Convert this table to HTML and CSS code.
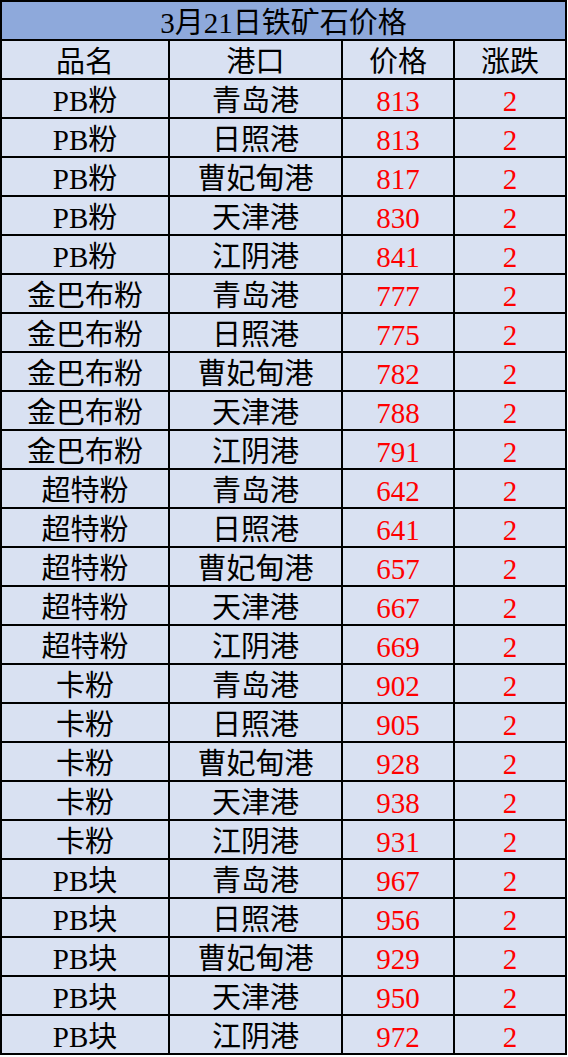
FILE: index.html
```html
<!DOCTYPE html>
<html lang="zh">
<head>
<meta charset="utf-8">
<title>3月21日铁矿石价格</title>
<link rel="stylesheet" href="styles.css">
</head>
<body>
<table class="price-table">
  <colgroup>
    <col class="c-name"><col class="c-port"><col class="c-price"><col class="c-chg">
  </colgroup>
  <thead>
    <tr><th colspan="4" class="title">3月21日铁矿石价格</th></tr>
    <tr class="head"><th>品名</th><th>港口</th><th>价格</th><th>涨跌</th></tr>
  </thead>
  <tbody>
    <tr><td>PB粉</td><td>青岛港</td><td class="num">813</td><td class="num">2</td></tr>
    <tr><td>PB粉</td><td>日照港</td><td class="num">813</td><td class="num">2</td></tr>
    <tr><td>PB粉</td><td>曹妃甸港</td><td class="num">817</td><td class="num">2</td></tr>
    <tr><td>PB粉</td><td>天津港</td><td class="num">830</td><td class="num">2</td></tr>
    <tr><td>PB粉</td><td>江阴港</td><td class="num">841</td><td class="num">2</td></tr>
    <tr><td>金巴布粉</td><td>青岛港</td><td class="num">777</td><td class="num">2</td></tr>
    <tr><td>金巴布粉</td><td>日照港</td><td class="num">775</td><td class="num">2</td></tr>
    <tr><td>金巴布粉</td><td>曹妃甸港</td><td class="num">782</td><td class="num">2</td></tr>
    <tr><td>金巴布粉</td><td>天津港</td><td class="num">788</td><td class="num">2</td></tr>
    <tr><td>金巴布粉</td><td>江阴港</td><td class="num">791</td><td class="num">2</td></tr>
    <tr><td>超特粉</td><td>青岛港</td><td class="num">642</td><td class="num">2</td></tr>
    <tr><td>超特粉</td><td>日照港</td><td class="num">641</td><td class="num">2</td></tr>
    <tr><td>超特粉</td><td>曹妃甸港</td><td class="num">657</td><td class="num">2</td></tr>
    <tr><td>超特粉</td><td>天津港</td><td class="num">667</td><td class="num">2</td></tr>
    <tr><td>超特粉</td><td>江阴港</td><td class="num">669</td><td class="num">2</td></tr>
    <tr><td>卡粉</td><td>青岛港</td><td class="num">902</td><td class="num">2</td></tr>
    <tr><td>卡粉</td><td>日照港</td><td class="num">905</td><td class="num">2</td></tr>
    <tr><td>卡粉</td><td>曹妃甸港</td><td class="num">928</td><td class="num">2</td></tr>
    <tr><td>卡粉</td><td>天津港</td><td class="num">938</td><td class="num">2</td></tr>
    <tr><td>卡粉</td><td>江阴港</td><td class="num">931</td><td class="num">2</td></tr>
    <tr><td>PB块</td><td>青岛港</td><td class="num">967</td><td class="num">2</td></tr>
    <tr><td>PB块</td><td>日照港</td><td class="num">956</td><td class="num">2</td></tr>
    <tr><td>PB块</td><td>曹妃甸港</td><td class="num">929</td><td class="num">2</td></tr>
    <tr><td>PB块</td><td>天津港</td><td class="num">950</td><td class="num">2</td></tr>
    <tr><td>PB块</td><td>江阴港</td><td class="num">972</td><td class="num">2</td></tr>
  </tbody>
</table>
</body>
</html>
```
FILE: styles.css
```css
html, body {
  margin: 0;
  padding: 0;
  background: #ffffff;
}

.price-table {
  table-layout: fixed;
  width: 567px;
  border-collapse: separate;
  border-spacing: 2px;
  background: #000000;
  font-family: "Liberation Serif", "Noto Sans CJK SC", serif;
  font-size: 29px;
  color: #000000;
}

.c-name { width: 166px; }
.c-port { width: 171px; }
.c-price { width: 110px; }
.c-chg { width: 110px; }

.price-table th,
.price-table td {
  height: 37px;
  padding: 5px 0 0 0;
  box-sizing: border-box;
  line-height: 32px;
  text-align: center;
  vertical-align: middle;
  font-weight: normal;
  background: #d9e1f2;
  white-space: nowrap;
  overflow: hidden;
}

.price-table th.title {
  background: #8ea9db;
}

.price-table td.num {
  color: #ff0000;
}
```
